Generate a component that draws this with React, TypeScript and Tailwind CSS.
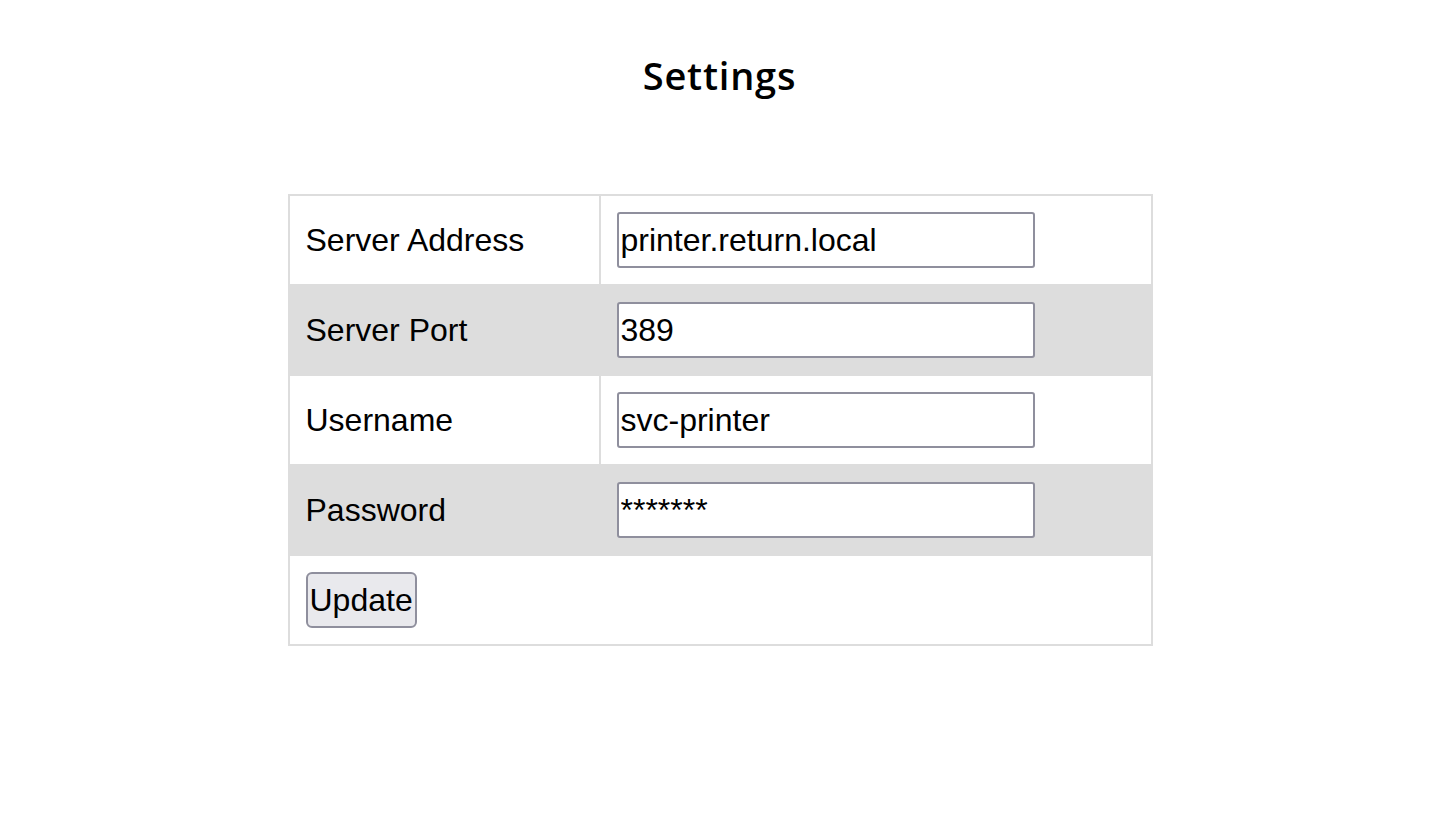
import { useState } from "react";

const rows = [
  { label: "Server Address", value: "printer.return.local", type: "text" },
  { label: "Server Port", value: "389", type: "text" },
  { label: "Username", value: "svc-printer", type: "text" },
  { label: "Password", value: "*******", type: "text" },
];

export default function App() {
  const [values, setValues] = useState(rows.map((r) => r.value));

  return (
    <div className="min-h-screen bg-white text-black font-['Liberation_Sans',Arial,sans-serif]">
      <h1 className="pt-[50px] text-center text-[38px] leading-[50px] font-semibold tracking-[0.8px] font-['Open_Sans',sans-serif]">
        Settings
      </h1>

      <div className="mt-[94px] flex justify-center pl-[1px]">
        <table className="w-[865px] border-collapse border-2 border-[#dddddd] text-[32px]">
          <tbody>
            {rows.map((row, i) => (
              <tr key={row.label} className={i % 2 === 1 ? "bg-[#dddddd]" : "bg-white"}>
                <td className="w-[311px] h-[90px] border-2 border-[#dddddd] px-4 py-4 align-middle">
                  {row.label}
                </td>
                <td className="border-2 border-[#dddddd] px-4 py-4 align-middle">
                  <input
                    type={row.type}
                    value={values[i]}
                    onChange={(e) => {
                      const next = [...values];
                      next[i] = e.target.value;
                      setValues(next);
                    }}
                    className="block w-[418px] h-[56px] border-2 border-[#8f8f9d] rounded-[3px] bg-white px-[2px] text-[32px] outline-none"
                  />
                </td>
              </tr>
            ))}
            <tr className="bg-white">
              <td colSpan={2} className="h-[90px] border-2 border-[#dddddd] px-4 py-4 align-middle">
                <button className="block h-[56px] border-2 border-[#8f8f9d] rounded-[6px] bg-[#e9e9ed] px-[2px] text-[32px]">
                  Update
                </button>
              </td>
            </tr>
          </tbody>
        </table>
      </div>
    </div>
  );
}
